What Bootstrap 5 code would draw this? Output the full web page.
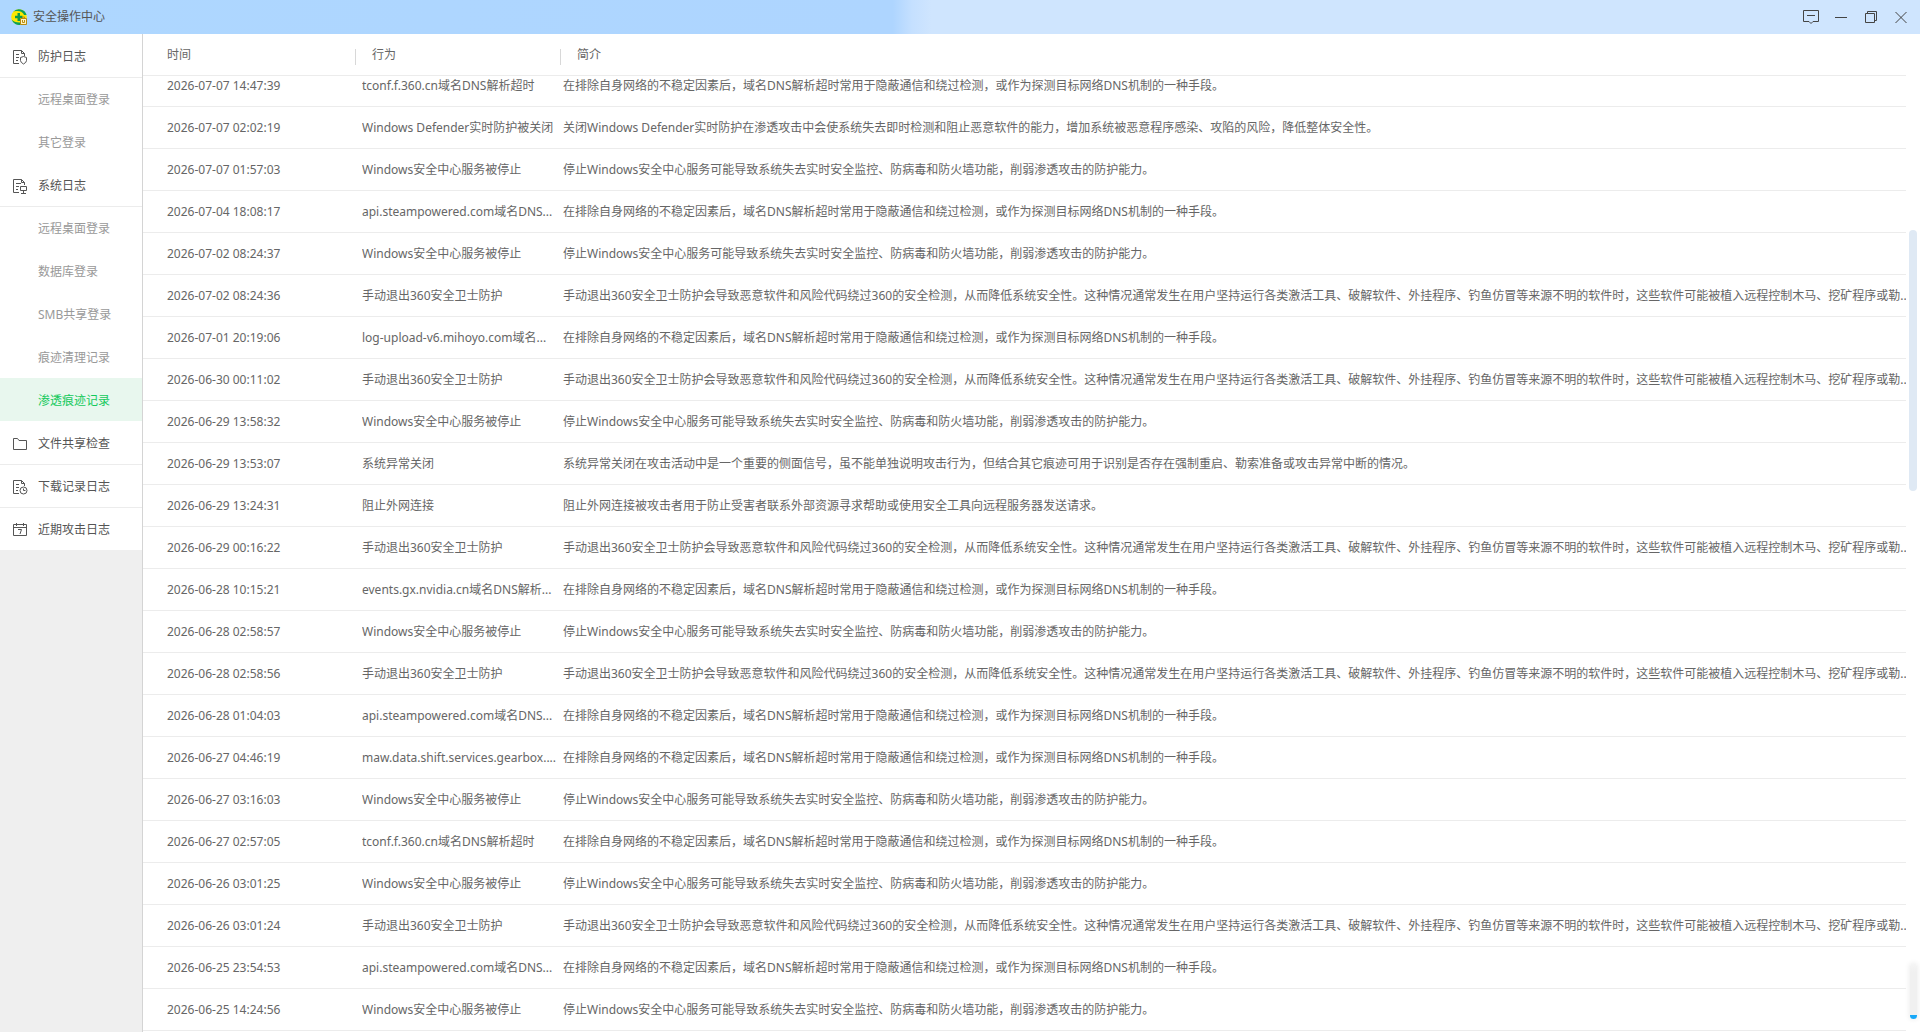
<!DOCTYPE html>
<html lang="zh-CN">
<head>
<meta charset="utf-8">
<meta name="viewport" content="width=device-width, initial-scale=1">
<title>安全操作中心</title>
<link href="https://cdn.jsdelivr.net/npm/bootstrap@5.3.0/dist/css/bootstrap.min.css" rel="stylesheet">
<style>
body { font-family: "Noto Sans", "Noto Sans CJK SC", sans-serif; font-size: 12px; line-height: 18px; color: #666; }
.titlebar { height: 34px; background: linear-gradient(90deg, #aed7ff 0, #aed5ff 46.5%, #c5e0ff 47.5%, #cfe5fe 48.5%, #cfe5fe 100%); padding: 0 4px 0 11px; }
.titlebar h1 { font-size: 12px; line-height: 18px; font-weight: 400; color: #555; padding-left: 6px; }
.win-btn { width: 30px; height: 32px; border: 0; background: none; padding: 0; color: #444; }
.sidebar { width: 143px; background: #efefef; border-right: 1px solid #d4d4d4; }
.side-link { display: flex; align-items: center; gap: 10px; height: 43px; padding: 2px 0 0 12px; background: #fff; color: #555; text-decoration: none; }
.side-link.sub { padding-left: 38px; color: #999; }
.side-link.top + .side-link { border-top: 1px solid #ececec; padding-top: 1px; }
.side-link.current { background: #e8f7ee; color: #14c95c; }
.log-pane { min-height: 0; }
.log-scroll { overflow: hidden; margin-right: 14px; }
.log-table { table-layout: fixed; width: 100%; border-collapse: separate; border-spacing: 0; }
.log-table th { position: sticky; top: 0; height: 42px; background: #fff; font-weight: 400; padding: 0 16px 0 0; border-bottom: 1px solid #ececec; }
.log-table th:first-child, .log-table td:first-child { padding-left: 24px; }
.log-table th + th span { display: block; position: relative; padding-left: 10px; }
.log-table th + th + th span { padding-left: 14px; }
.log-table th + th span::before { content: ""; position: absolute; left: -7px; top: 3px; height: 16px; border-left: 1px solid #d8d8d8; }
.log-table th + th + th span::before { left: -3px; }
.log-table td { height: 42px; padding: 0; border-bottom: 1px solid #ececec; white-space: nowrap; overflow: hidden; }
.col-time { width: 219px; }
.col-act { width: 201px; }
.thumb { right: 3px; top: 196px; width: 8px; height: 261px; border-radius: 4px; background: #dfe9f4; }
.float-tab { right: 3px; bottom: 13px; width: 7px; height: 55px; background: linear-gradient(#f5f5f5 0, #f0f0f0 8px, #f0f0f0 51px, #18a8f8 51px); border-radius: 2px 2px 4px 4px; box-shadow: 0 0 5px 1px #eeeeee; }
</style>
<script src="https://cdn.jsdelivr.net/npm/bootstrap@5.3.0/dist/js/bootstrap.bundle.min.js"></script>
</head>
<body class="vh-100 d-flex flex-column overflow-hidden bg-white">
<header class="titlebar d-flex align-items-center flex-shrink-0">
  <svg width="16" height="16" viewBox="0 0 16 16" aria-hidden="true">
    <circle cx="8" cy="8" r="7.800" fill="#fbe800"/>
    <path d="M2 3A8 8 0 0 1 15.600 6L13 6A7 5 0 0 0 2 3Z" fill="#0ba05a"/>
    <path d="M.6 10.500A8 8 0 0 0 10 15.700L9 13.500A9 6 0 0 1 .6 10.500Z" fill="#0ba05a"/>
    <path d="M6.500 4h2.500v2.800h2.500v2.400H9V12H6.500V9.200H4V6.800h2.500z" fill="#0a9b4a"/>
    <path d="M9.500 9.500h6v6h-6z" fill="#fff4c0" stroke="#b98a10"/>
    <path d="M11.500 9V8h2v1M11.500 11v2.500h2V11" fill="none" stroke="#b98a10"/>
  </svg>
  <h1 class="mb-0 flex-grow-1">安全操作中心</h1>
  <div class="d-flex align-self-start">
    <button class="win-btn" aria-label="反馈"><svg width="18" height="16" viewBox="0 0 18 16" fill="none" stroke="currentColor"><path d="M7 12.500H1.500v-11h15v11H11L9 14.500zM5 6.500h8"/></svg></button>
    <button class="win-btn" aria-label="最小化"><svg width="14" height="14" viewBox="0 0 14 14" fill="none" stroke="currentColor"><path d="M1 7.500h12"/></svg></button>
    <button class="win-btn" aria-label="还原"><svg width="14" height="14" viewBox="0 0 14 14" fill="none" stroke="currentColor"><path d="M1.500 3.500h9v9h-9zM3.500 3V1.500h9v9H11"/></svg></button>
    <button class="win-btn" aria-label="关闭"><svg width="14" height="14" viewBox="0 0 14 14" fill="none" stroke="currentColor"><path d="M1.500 2l11 11M12.500 2l-11 11"/></svg></button>
  </div>
</header>
<div class="d-flex flex-grow-1 log-pane">
  <nav class="sidebar flex-shrink-0">
    <a class="side-link top" href="#"><svg width="16" height="16" viewBox="0 0 16 16" fill="none" stroke="currentColor"><path d="M7 14.500H1.500v-13h8l3 3V7M9.500 1.500v3h3M4 5.500h3M4 8.500h3M4 11.500h2M11.500 7.500l3 1v3q0 2-3 3.500q-3-1.500-3-3.500v-3z"/></svg>防护日志</a>
    <a class="side-link sub" href="#">远程桌面登录</a>
    <a class="side-link sub" href="#">其它登录</a>
    <a class="side-link top" href="#"><svg width="16" height="16" viewBox="0 0 16 16" fill="none" stroke="currentColor"><path d="M7 14.500H1.500v-13h8l3 3V7M9.500 1.500v3h3M4 5.500h5M4 8.500h3M4 11.500h2M8.500 8.500h6v4h-6zM11.500 12.500v3M9 15.500h5"/></svg>系统日志</a>
    <a class="side-link sub" href="#">远程桌面登录</a>
    <a class="side-link sub" href="#">数据库登录</a>
    <a class="side-link sub" href="#">SMB共享登录</a>
    <a class="side-link sub" href="#">痕迹清理记录</a>
    <a class="side-link sub current" href="#" aria-current="page">渗透痕迹记录</a>
    <a class="side-link top" href="#"><svg width="16" height="16" viewBox="0 0 16 16" fill="none" stroke="currentColor"><path d="M1.500 13.500v-11h4l1.500 2h7.500v9z"/></svg>文件共享检查</a>
    <a class="side-link top" href="#"><svg width="16" height="16" viewBox="0 0 16 16" fill="none" stroke="currentColor"><path d="M7 14.500H1.500v-13h8l3 3V7M9.500 1.500v3h3M4 5.500h3M4 8.500h3M4 11.500h2M11.500 9.500v2h2"/><circle cx="11.500" cy="11.500" r="3.500"/></svg>下载记录日志</a>
    <a class="side-link top" href="#"><svg width="16" height="16" viewBox="0 0 16 16" fill="none" stroke="currentColor"><path d="M1.500 2.500h13v11h-13zM1.500 5.500h13M4.500 1v3M11.500 1v3M6 7.500h3.500L8 12"/></svg>近期攻击日志</a>
  </nav>
  <main class="flex-grow-1 position-relative d-flex flex-column log-pane">
    <div class="log-scroll flex-grow-1" id="scroller">
      <table class="log-table">
        <colgroup><col class="col-time"><col class="col-act"><col></colgroup>
        <thead><tr><th scope="col">时间</th><th scope="col"><span>行为</span></th><th scope="col"><span>简介</span></th></tr></thead>
        <tbody id="rows"></tbody>
      </table>
    </div>
    <div class="thumb position-absolute"></div>
    <div class="float-tab position-absolute"></div>
  </main>
</div>
<script>
const about = {
  dns: '在排除自身网络的不稳定因素后，域名DNS解析超时常用于隐蔽通信和绕过检测，或作为探测目标网络DNS机制的一种手段。',
  defender: '关闭Windows Defender实时防护在渗透攻击中会使系统失去即时检测和阻止恶意软件的能力，增加系统被恶意程序感染、攻陷的风险，降低整体安全性。',
  center: '停止Windows安全中心服务可能导致系统失去实时安全监控、防病毒和防火墙功能，削弱渗透攻击的防护能力。',
  exit: '手动退出360安全卫士防护会导致恶意软件和风险代码绕过360的安全检测，从而降低系统安全性。这种情况通常发生在用户坚持运行各类激活工具、破解软件、外挂程序、钓鱼仿冒等来源不明的软件时，这些软件可能被植入远程控制木马、挖矿程序或勒..',
  shutdown: '系统异常关闭在攻击活动中是一个重要的侧面信号，虽不能单独说明攻击行为，但结合其它痕迹可用于识别是否存在强制重启、勒索准备或攻击异常中断的情况。',
  block: '阻止外网连接被攻击者用于防止受害者联系外部资源寻求帮助或使用安全工具向远程服务器发送请求。'
};
const center = 'Windows安全中心服务被停止', quit = '手动退出360安全卫士防护';
const logs = [
  ['2026-07-07 14:47:39', 'tconf.f.360.cn域名DNS解析超时', 'dns'],
  ['2026-07-07 02:02:19', 'Windows Defender实时防护被关闭', 'defender'],
  ['2026-07-07 01:57:03', center, 'center'],
  ['2026-07-04 18:08:17', 'api.steampowered.com域名DNS...', 'dns'],
  ['2026-07-02 08:24:37', center, 'center'],
  ['2026-07-02 08:24:36', quit, 'exit'],
  ['2026-07-01 20:19:06', 'log-upload-v6.mihoyo.com域名...', 'dns'],
  ['2026-06-30 00:11:02', quit, 'exit'],
  ['2026-06-29 13:58:32', center, 'center'],
  ['2026-06-29 13:53:07', '系统异常关闭', 'shutdown'],
  ['2026-06-29 13:24:31', '阻止外网连接', 'block'],
  ['2026-06-29 00:16:22', quit, 'exit'],
  ['2026-06-28 10:15:21', 'events.gx.nvidia.cn域名DNS解析...', 'dns'],
  ['2026-06-28 02:58:57', center, 'center'],
  ['2026-06-28 02:58:56', quit, 'exit'],
  ['2026-06-28 01:04:03', 'api.steampowered.com域名DNS...', 'dns'],
  ['2026-06-27 04:46:19', 'maw.data.shift.services.gearbox....', 'dns'],
  ['2026-06-27 03:16:03', center, 'center'],
  ['2026-06-27 02:57:05', 'tconf.f.360.cn域名DNS解析超时', 'dns'],
  ['2026-06-26 03:01:25', center, 'center'],
  ['2026-06-26 03:01:24', quit, 'exit'],
  ['2026-06-25 23:54:53', 'api.steampowered.com域名DNS...', 'dns'],
  ['2026-06-25 14:24:56', center, 'center']
];
document.getElementById('rows').innerHTML = logs.map(([time, act, kind]) =>
  `<tr><td>${time}</td><td>${act}</td><td>${about[kind]}</td></tr>`).join('') + '<tr><td></td><td></td><td></td></tr>';
document.getElementById('scroller').scrollTop = 11;
</script>
</body>
</html>
